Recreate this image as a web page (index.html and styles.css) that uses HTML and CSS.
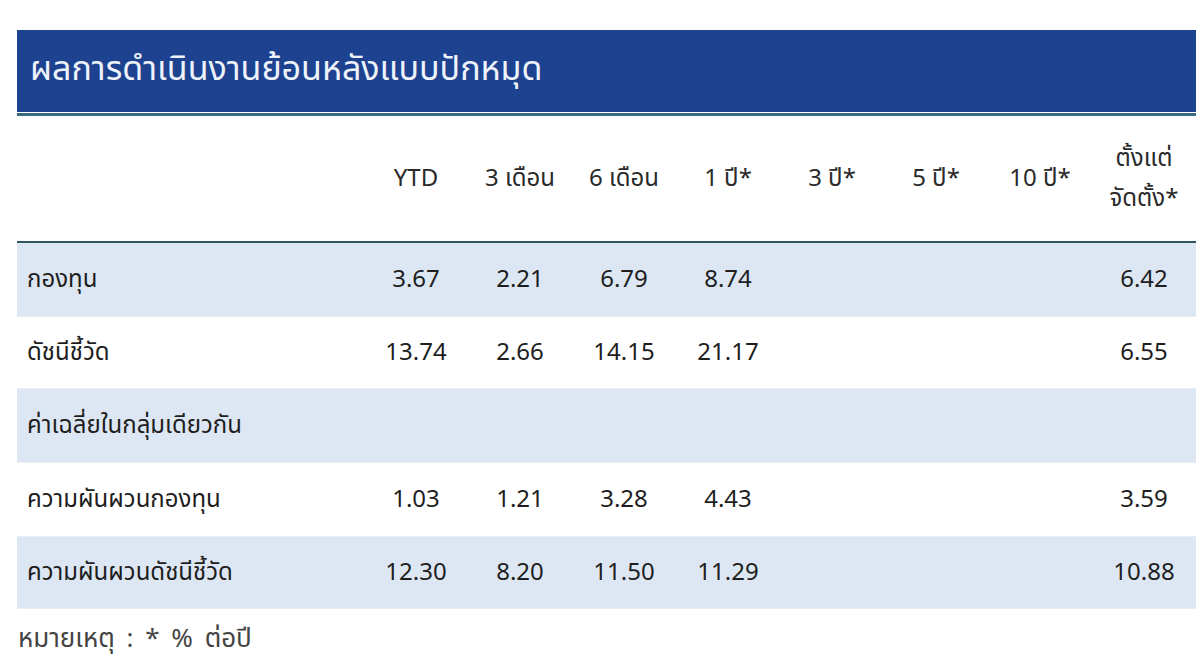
FILE: index.html
```html
<!DOCTYPE html>
<html lang="th">
<head>
<meta charset="utf-8">
<link rel="stylesheet" href="styles.css">
</head>
<body>
<div class="wrap">
  <div class="title">ผลการดำเนินงานย้อนหลังแบบปักหมุด</div>
  <table class="perf">
    <colgroup>
      <col class="c-label">
      <col class="c-num"><col class="c-num"><col class="c-num"><col class="c-num">
      <col class="c-num"><col class="c-num"><col class="c-num"><col class="c-num">
    </colgroup>
    <thead>
      <tr>
        <th class="lbl"></th>
        <th>YTD</th>
        <th>3 เดือน</th>
        <th>6 เดือน</th>
        <th>1 ปี*</th>
        <th>3 ปี*</th>
        <th>5 ปี*</th>
        <th>10 ปี*</th>
        <th class="since">ตั้งแต่<br>จัดตั้ง*</th>
      </tr>
    </thead>
    <tbody>
      <tr class="alt r1">
        <td class="lbl">กองทุน</td>
        <td>3.67</td><td>2.21</td><td>6.79</td><td>8.74</td><td></td><td></td><td></td><td>6.42</td>
      </tr>
      <tr class="r2">
        <td class="lbl">ดัชนีชี้วัด</td>
        <td>13.74</td><td>2.66</td><td>14.15</td><td>21.17</td><td></td><td></td><td></td><td>6.55</td>
      </tr>
      <tr class="alt r1">
        <td class="lbl" colspan="9">ค่าเฉลี่ยในกลุ่มเดียวกัน</td>
      </tr>
      <tr class="r1">
        <td class="lbl">ความผันผวนกองทุน</td>
        <td>1.03</td><td>1.21</td><td>3.28</td><td>4.43</td><td></td><td></td><td></td><td>3.59</td>
      </tr>
      <tr class="alt r2">
        <td class="lbl">ความผันผวนดัชนีชี้วัด</td>
        <td>12.30</td><td>8.20</td><td>11.50</td><td>11.29</td><td></td><td></td><td></td><td>10.88</td>
      </tr>
    </tbody>
  </table>
  <div class="note">หมายเหตุ : * % ต่อปี</div>
</div>
</body>
</html>
```

FILE: styles.css
```css
html, body {
  margin: 0;
  padding: 0;
  background: #ffffff;
}
body {
  font-family: Tahoma, "Noto Sans Thai", "Noto Sans Thai UI", Loma, Garuda, "Noto Sans", "DejaVu Sans", sans-serif;
  color: #222222;
}
.wrap {
  padding: 30px 4px 0 17px;
}
.title {
  height: 83px;
  box-sizing: border-box;
  background: #1d4290;
  color: #eef2fa;
  font-size: 34px;
  line-height: 80px;
  padding-left: 13px;
  border-bottom: 1px solid #ffffff;
}
.perf {
  width: 1179px;
  border-collapse: collapse;
  table-layout: fixed;
  border-top: 3px solid #3a6a80;
}
.c-label { width: 347px; }
.c-num { width: 104px; }
.perf th {
  height: 125px;
  font-weight: normal;
  font-size: 24px;
  color: #2a2a2a;
  text-align: center;
  vertical-align: middle;
  padding: 0;
  border-bottom: 2px solid #2f5563;
  white-space: nowrap;
}
.perf th.since {
  line-height: 40px;
}
.perf td {
  padding: 0;
  font-size: 24px;
  text-align: center;
  vertical-align: middle;
  color: #1e1e1e;
  border-bottom: 1px solid #e9eef4;
}
.perf tr.r1 td { height: 73px; }
.perf tr.r2 td { height: 71px; }
.perf td.lbl {
  text-align: left;
  padding-left: 10px;
}
.perf tr.alt td {
  background: #dde7f3;
}
.note {
  margin-top: 10px;
  margin-left: 1px;
  font-size: 26px;
  word-spacing: 5px;
  color: #444444;
}
```
